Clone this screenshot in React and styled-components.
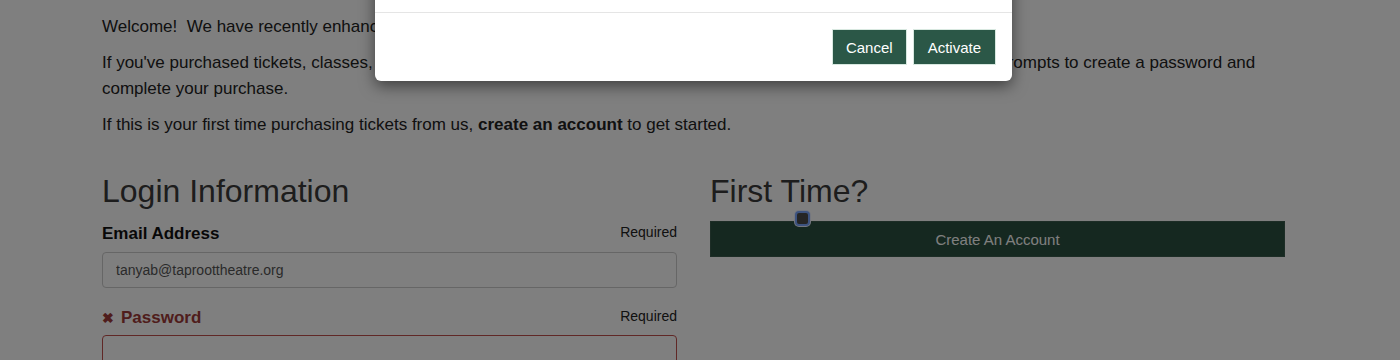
import { createGlobalStyle, styled } from "styled-components";

const GlobalStyle = createGlobalStyle`
  html, body {
    margin: 0;
    padding: 0;
    background: #fff;
    font-family: "Liberation Sans", Arial, sans-serif;
    color: #222;
    overflow: hidden;
  }
  * { box-sizing: border-box; }
`;

export default function App() {
  return (
    <>
      <GlobalStyle />
      <Page>
        <Intro>
          Welcome!&nbsp; We have recently enhanced our ticketing system and
          accounts.
        </Intro>
        <Intro>
          If you've purchased tickets, classes, or donated with us before, your
          account is already here. Log in now and follow the prompts to create a
          password and complete your purchase.
        </Intro>
        <Intro>
          If this is your first time purchasing tickets from us,{" "}
          <strong>create an account</strong> to get started.
        </Intro>

        <Columns>
          <Column>
            <Heading>Login Information</Heading>
            <FieldHead>
              <Label>Email Address</Label>
              <Req>Required</Req>
            </FieldHead>
            <Input defaultValue="tanyab@taproottheatre.org" />
            <FieldHead $tight>
              <Label $error>
                <ErrIcon>✖</ErrIcon>Password
              </Label>
              <Req>Required</Req>
            </FieldHead>
            <Input type="password" $error />
          </Column>
          <Column>
            <Heading>First Time?</Heading>
            <CreateWrap>
              <FocusDot />
              <CreateBtn>Create An Account</CreateBtn>
            </CreateWrap>
          </Column>
        </Columns>
      </Page>

      <Backdrop />
      <Modal>
        <ModalBody />
        <ModalFooter>
          <ModalBtn>Cancel</ModalBtn>
          <ModalBtn>Activate</ModalBtn>
        </ModalFooter>
      </Modal>
    </>
  );
}

const Page = styled.main`
  width: 1183px;
  margin: 0 0 0 102px;
  padding-top: 14px;
`;

const Intro = styled.p`
  margin: 0 0 10px;
  font-size: 17px;
  line-height: 26px;
  color: #222;
  strong {
    font-weight: 700;
  }
`;

const Columns = styled.div`
  display: grid;
  grid-template-columns: 575px 575px;
  column-gap: 33px;
  margin-top: 35px;
`;

const Column = styled.section`
  display: flex;
  flex-direction: column;
`;

const Heading = styled.h2`
  margin: 0 0 12px;
  font-size: 32px;
  font-weight: 300;
  line-height: 36px;
  color: #3a3a3a;
`;

const FieldHead = styled.div`
  display: flex;
  justify-content: space-between;
  align-items: flex-start;
  margin-top: 3px;
  margin-bottom: ${(p) => (p.$tight ? "7px" : "8px")};
`;

const Label = styled.label`
  font-size: 17px;
  font-weight: 700;
  line-height: 20px;
  color: ${(p) => (p.$error ? "#9e3a38" : "#111")};
  display: flex;
  align-items: center;
`;

const ErrIcon = styled.span`
  font-size: 14px;
  margin-right: 7px;
`;

const Req = styled.span`
  font-size: 14px;
  line-height: 16px;
  color: #222;
`;

const Input = styled.input`
  width: 100%;
  height: 36px;
  padding: 0 13px;
  margin-bottom: 17px;
  border: 1px solid ${(p) => (p.$error ? "#c0504d" : "#ccc")};
  border-radius: 4px;
  background: #fff;
  font-family: "Liberation Sans", Arial, sans-serif;
  font-size: 14px;
  color: #555;
  outline: none;
`;

const CreateWrap = styled.div`
  position: relative;
`;

const FocusDot = styled.span`
  position: absolute;
  left: 85px;
  top: -10px;
  width: 15px;
  height: 15px;
  border: 2px solid #7aa6ff;
  border-radius: 4px;
  background: #4a4a4a;
  box-shadow: 0 0 0 1px #e8eeff;
  z-index: 2;
`;

const CreateBtn = styled.button`
  display: block;
  width: 100%;
  height: 36px;
  border: 1px solid #3a5a4c;
  background: #2a5040;
  color: #fff;
  font-family: "Liberation Sans", Arial, sans-serif;
  font-size: 15px;
`;

const Backdrop = styled.div`
  position: fixed;
  inset: 0;
  background: rgba(0, 0, 0, 0.5);
  z-index: 10;
`;

const Modal = styled.div`
  position: fixed;
  left: 375px;
  top: -120px;
  width: 637px;
  background: #fff;
  border-radius: 6px;
  box-shadow: 0 5px 15px rgba(0, 0, 0, 0.5);
  z-index: 20;
`;

const ModalBody = styled.div`
  height: 132px;
`;

const ModalFooter = styled.div`
  display: flex;
  justify-content: flex-end;
  gap: 6px;
  padding: 16px 16px 16px;
  border-top: 1px solid #e5e5e5;
`;

const ModalBtn = styled.button`
  height: 36px;
  padding: 0 13px;
  border: 1px solid #d8e8e0;
  background: #2b5747;
  color: #fff;
  font-family: "Liberation Sans", Arial, sans-serif;
  font-size: 15px;
  cursor: pointer;
  &:last-child {
    padding: 0 14px;
  }
`;
